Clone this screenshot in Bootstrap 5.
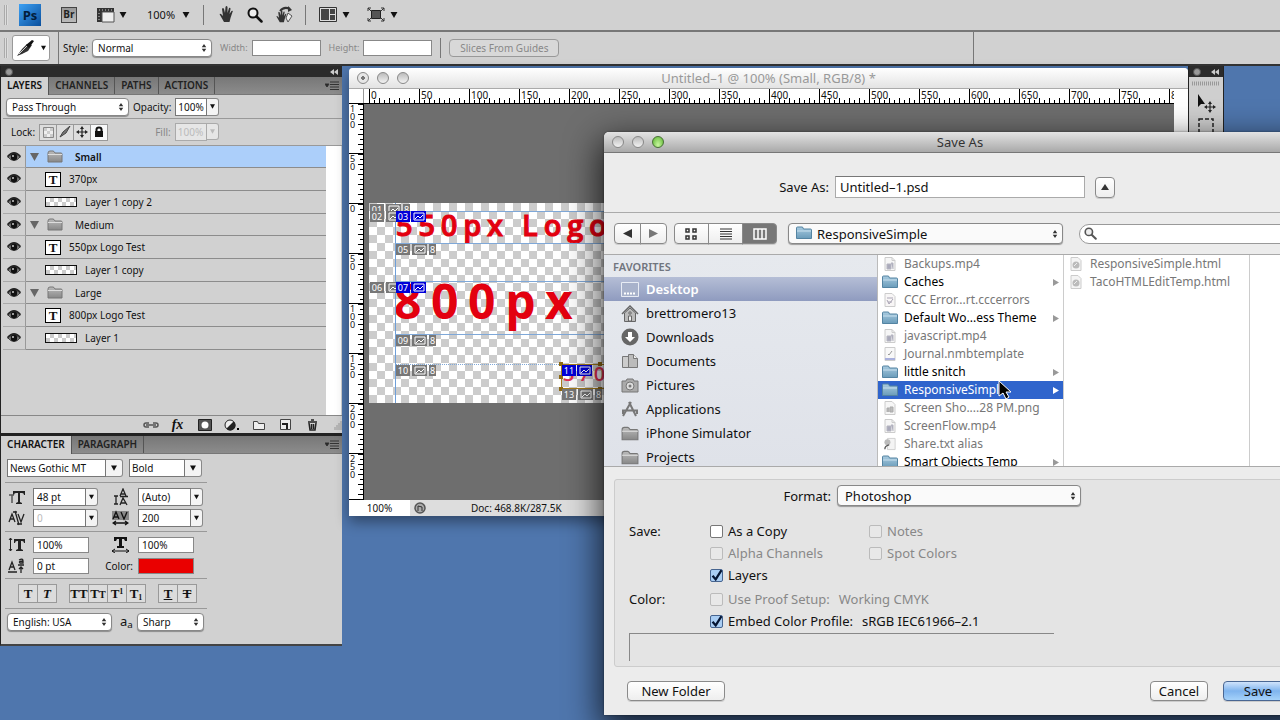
<!DOCTYPE html>
<html lang="en">
<head>
<meta charset="utf-8">
<meta name="viewport" content="width=device-width, initial-scale=1">
<title>Untitled-1 – Save As</title>
<link href="https://cdn.jsdelivr.net/npm/bootstrap@5.3.0/dist/css/bootstrap.min.css" rel="stylesheet">
<style>
body{font-family:"Noto Sans","Open Sans",sans-serif;font-size:10px;line-height:16px;color:#111;background:#4f76ad;min-height:100vh;overflow:hidden}
button,input,select{font:inherit;color:inherit;border-radius:0}
svg{display:block;flex:none}
a{color:inherit;text-decoration:none}
select{appearance:none;border:1px solid #888;border-radius:4px;background:#fff url("data:image/svg+xml,%3Csvg xmlns='http://www.w3.org/2000/svg' width='8' height='10'%3E%3Cpath d='M1 4 4 0 7 4zM1 6 4 10 7 6z' fill='%23333'/%3E%3C/svg%3E") no-repeat right 4px center;background-size:6px 8px;box-shadow:0 1px 1px #0005;padding:0 14px 0 5px;height:18px}
/* top bars */
.bar{background:#d1d1d1;border-bottom:2px solid #777}
.bar-app{display:grid;height:32px;grid-template-columns:15px 42px 35px 23px 28px 35px 21px 16px 28px 29px 29px 14px 23px 25px 23px 20px;align-items:center;padding-left:4px;padding-bottom:1px;font-size:11px}
.bar-opt{height:34px;border-bottom-color:#333}
.grip{width:4px;height:20px;background:repeating-linear-gradient(90deg,#aaa 0 1px,#ddd 1px 2px)}
.vline{width:1px;height:20px;background:#777}
.ps{width:22px;height:22px;background:linear-gradient(135deg,#3da1f4,#0b4f9c);color:#031d3c;font:bold 13px/22px "Open Sans",sans-serif;text-align:center;border:0;padding:0}
.br{width:16px;height:16px;border:1px solid #444;background:linear-gradient(#999,#bbb);color:#222;font:bold 10px/13px "Open Sans",sans-serif;padding:0}
.toolbtn{width:38px;height:26px;border:1px solid #999;border-radius:3px;background:#fff;padding:0}
.f9{font-size:9px}
.dim{color:#888}
.box{border:1px solid #888;background:#fff;height:16px;padding:0 4px;min-width:0}
.guides{border:1px solid #999;border-radius:4px;background:#d8d8d8;color:#888;height:18px;line-height:14px;width:110px;padding:0}
/* palettes */
.palettes{width:342px;background:#d1d1d1;border-left:1px solid #222;border-bottom:2px solid #444}
.darkhead{height:11px;background:#2b2b2b;padding:0 4px}
.dotbtn{width:8px;height:8px;border-radius:50%;background:#999;border:1px solid #555;padding:0}
.tabs{background:linear-gradient(#777,#8c8c8c);height:18px;border-bottom:1px solid #777}
.tabs button{border:0;border-right:1px solid #555;background:transparent;font-weight:600;line-height:17px;height:17px;padding:0 6px;color:#222}
.tabs .on{background:#d1d1d1;color:#111;height:18px}
.tabs svg{margin-left:auto;margin-right:3px}
.blend{height:24px;border-bottom:1px solid #999;margin-left:2px;padding-left:3px}
.lockrow{height:27px;margin-left:2px;border-bottom:1px solid #999}
.lockrow button{width:18px;height:17px;border:1px solid #999;background:#ddd;padding:0;display:grid;place-items:center}
.lockrow>button{margin-right:-1px}
.combo{height:18px}
.combo input{border:1px solid #777;background:#fff;height:18px;padding:0 2px;min-width:0;flex:1;width:0}
.combo button{border:1px solid #888;border-left:0;border-radius:0 3px 3px 0;background:#f4f4f4;width:12px;padding:0;display:grid;place-items:center}
.pct{width:44px}
.off input,.off button{color:#bbb;border-color:#aaa;background:#e6e6e6}
.layers{border-right:15px solid #fff;height:269px;margin-right:1px;margin-left:2px}
.lay{display:grid;grid-template-columns:23px 1fr;height:23px}
.lay .eye{border-right:1px solid #999;border-bottom:1px solid #aaa;display:grid;place-items:center}
.lay .what{display:flex;align-items:center;border-bottom:1px solid #8c8c8c;padding-left:19px}
.lay.grp{height:22px}
.lay.grp .what{padding-left:4px}
.lay.sel .what{background:#accffa;font-weight:600}
.tri{color:#666}
.tee{width:16px;height:15px;border:1px solid #000;background:#fff;font:bold 13px/13px "Liberation Serif",serif;text-align:center}
.thumb{width:32px;height:10px;border:1px solid #111;background:repeating-conic-gradient(#ccc 0 25%,#fff 0 50%) 0 0/8px 8px}
.layfoot{height:21px;border-top:1px solid #888;border-bottom:3px solid #222;display:grid;grid-template-columns:136px repeat(7,27px) 1fr;align-items:center;justify-items:center}
.char{width:202px;margin-left:4px}
.char .ln{display:grid;align-items:center}
.sep{border-bottom:1px solid #999}
.l1{grid-template-columns:116px 73px;column-gap:6px;height:29px;padding-left:2px}
.l2{grid-template-columns:20px 65px 30px 65px;column-gap:5px;padding-left:3px;height:21px}
.l3{grid-template-columns:20px 56px 39px 56px;column-gap:5px;padding-left:3px;height:21px}
.p2{padding:3px 0 3px}
.p3{padding:2px 0 2px}
.l2 input,.l3 input{padding:0 3px}
.combo .wide{width:17px}
.styles button{width:20px;height:19px;border:1px solid #999;margin-right:-1px;background:#dcdcdc;padding:0;font:bold 13px/15px "Liberation Serif",serif}
.styles small{font-size:10px}
.styles sup,.styles sub{font-size:8px}
.styles{height:30px;padding-left:13px}
.langrow{padding:4px 3px 0 2px;height:35px;align-items:flex-start}
.swatch{background:#ea0000;height:16px;border:1px solid #888;padding:0}
/* windows */
.win{position:absolute}
.docwin{left:349px;right:92px;top:2px;height:448px;background:#ddd;border-radius:4px 4px 0 0;box-shadow:0 6px 14px #0006}
.doctitle{height:22px;background:linear-gradient(#fff,#e3e3e3);border-bottom:1px solid #aaa;border-radius:4px 4px 0 0;color:#999;font-size:13px}
.lights{gap:8px}
.lights button{width:12px;height:12px;border-radius:50%;border:1px solid #888;background:linear-gradient(#bbb,#f2f2f2);padding:0;display:grid;place-items:center}
.lights .edited{background:radial-gradient(circle,#777 0 2px,#e6e6e6 2px)}
.lights .go{background:radial-gradient(at 50% 80%,#c9f7a0,#5bb52f);border-color:#476f35}
.mid{flex:none;text-align:center}
.hrule{height:15px;background:#fff;border-bottom:1px solid #000;overflow:hidden}
.corner{width:15px;border-right:1px solid #999;flex:none}
.hticks{margin-left:5px;width:805px;overflow:hidden;background:repeating-linear-gradient(90deg,#000 0 1px,transparent 1px 50px),repeating-linear-gradient(90deg,#000 0 1px,transparent 1px 10px) 0 100%/100% 5px no-repeat,repeating-linear-gradient(90deg,#000 0 1px,transparent 1px 5px) 0 100%/100% 3px no-repeat}
.hticks span{flex:0 0 50px;padding-left:2px;font-size:10px;line-height:12px}
.vrule{width:15px;background:#fff;border-right:1px solid #000;flex:none}
.vticks{height:396px;overflow:hidden;background:repeating-linear-gradient(#000 0 1px,transparent 1px 50px) 0 -1px,repeating-linear-gradient(#000 0 1px,transparent 1px 10px) 100% 0/5px 100% no-repeat,repeating-linear-gradient(#000 0 1px,transparent 1px 5px) 100% 0/3px 100% no-repeat}
.vticks span{display:block;height:50px;width:7px;margin-left:1px;padding-top:1px;word-break:break-all;font-size:9px;line-height:8px}
.stage{background:#6e6e6e;padding:99px 0 0 5px;height:396px;overflow:hidden}
.art{position:relative;width:800px;height:200px;background:repeating-conic-gradient(#fff 0 25%,#ccc 0 50%) 0 0/16px 16px}
.art>*{position:absolute}
.ink{color:#e3000f;letter-spacing:.2em;white-space:nowrap;font-family:"Open Sans",sans-serif}
.ink-m{left:27px;top:0;font-size:29px;font-weight:600;line-height:44px;-webkit-text-stroke:1px #e3000f}
.ink-l{left:25px;top:64px;font-size:48px;font-weight:700;line-height:68px}
.ink-s{left:194px;top:157px;font-size:20px;font-weight:600;line-height:28px;color:#e3304f}
.gl{left:26px;right:0;border-top:1px solid #7fa8d8}
.slice{display:flex;gap:2px;color:#fff;font-size:9px;line-height:11px;height:11px}
.slice i{font-style:normal;background:#777;display:grid;place-items:center}
.slice i:first-child{width:14px}.slice i:nth-child(2){width:15px}.slice i:nth-child(3){width:7px}
.slice.u i{background:#0000d8}
.slice.u{gap:1px}
.hd{width:4px;height:4px;background:#8f6a14}
.docfoot{height:16px;background:#ddd;font-size:10px}
.tools{right:56px;width:36px;top:0;height:120px;background:#cfcfcf;border:solid #222;border-width:0 1px}
/* save dialog */
.dlg{left:604px;right:-36px;top:66px;height:583px;background:#ececec;border-radius:5px 5px 0 0;box-shadow:0 12px 34px 4px #000b,0 0 2px #0008;font-size:13px;line-height:18px;display:flex;flex-direction:column}
.dlgtitle{height:21px;background:linear-gradient(#e3e3e3,#a9a9a9);border-bottom:1px solid #777;border-radius:5px 5px 0 0;color:#333}
.namerow{height:60px;border-bottom:1px solid #aaa;display:grid;grid-template-columns:225px 250px 24px;column-gap:6px;align-items:center;padding-top:9px}
.namerow label,.fmt label{text-align:right}
.namerow input{height:22px;border:1px solid #aaa;border-top-color:#777;padding:0 4px}
.namerow .tog{height:21px;margin-left:4px}
.btnx{border:1px solid #8a8a8a;border-radius:4px;background:linear-gradient(#fff,#eee);height:20px;padding:0;line-height:16px;box-shadow:0 1px 0 #0002;display:grid;place-items:center}
.navrow{height:42px;border-bottom:1px solid #aaa;padding:0 10px}
.seg .btnx{width:35px;border-radius:0;margin-right:-1px;height:21px}
.seg .btnx:first-child{border-radius:4px 0 0 4px}.seg .btnx:last-child{border-radius:0 4px 4px 0}
.seg .btnx.s{width:27px}
.seg .dark{background:#777}
.place{width:275px}
.place select,.fmt select{width:100%;height:21px;border-radius:4px;background-color:#fafafa;font-size:13px}
.place select{padding-left:28px}
.fmt select{padding-left:7px}
.place svg{position:absolute;left:8px;top:3px}
.find{height:20px;border:1px solid #999;border-radius:10px;background:#fff}
.find input{border:0;background:transparent;height:16px;outline:0}
.brow{height:212px;border-bottom:1px solid #aaa;display:grid;grid-template-columns:274px 186px 186px 1fr;overflow:hidden;background:#fff}
.side{background:linear-gradient(#e6e9ee,#dfe2e9);border-right:1px solid #bbb;overflow:hidden}
.side h2{font-size:11px;line-height:22px;font-weight:600;color:#70757e;margin:0;padding:1px 0 0 9px;height:22px}
.side a{display:flex;align-items:center;gap:7px;height:24px;padding-left:17px}
.side a.on{background:linear-gradient(#b5bed6,#8f9bbf);color:#fff;font-weight:600}
.pane{border-right:1px solid #ccc;overflow:hidden}
.pane a{display:grid;grid-template-columns:16px 1fr 7px;align-items:center;justify-items:start;height:18px;padding:0 3px 0 4px;column-gap:6px;color:#777;font-size:12px;white-space:nowrap}
.pane a>:first-child{justify-self:center}
.pane a.dir{color:#000}
.pane .more{color:#999}
.pane a.on,.pane a.on .more{background:#2f64cc;color:#fff}
.opts{margin:12px 10px 0;height:188px;background:#e4e4e4;border:1px solid #ccc;border-radius:3px;padding:5px 14px 0}
.fmt{display:grid;grid-template-columns:202px 244px;column-gap:6px;align-items:center;margin-bottom:14px}
.opts .ck{display:grid;grid-template-columns:81px 159px 1fr;height:22px;align-items:center}
.opts .ck.gap{margin-top:2px}
.opts .two{grid-template-columns:81px 1fr}
.ck label{display:flex;gap:5px;align-items:center;white-space:nowrap}
.ck em{font-style:normal;margin-left:4px}
.ck input{appearance:none;flex:none;width:13px;height:13px;border:1px solid #777;border-radius:2px;background:#fff;margin:0}
.ck input:disabled{border-color:#bbb;background:#e8e8e8}
.ck input:disabled~*{color:#888}
.ck input:checked{border-color:#46648f;background:#a9cdf3 url("data:image/svg+xml,%3Csvg xmlns='http://www.w3.org/2000/svg' viewBox='0 0 12 12'%3E%3Cpath d='M2 6 5 9.500 11 0' fill='none' stroke='%23051533' stroke-width='2.200'/%3E%3C/svg%3E") center/12px no-repeat}
.well{width:425px;height:28px;border:solid #888;border-width:1px 0 0 1px;margin-top:1px}
.acts{flex:1;padding:0 23px;gap:15px}
.save{background:linear-gradient(#cfe3fb,#7fb4ee 50%,#a5d2fa);border-color:#4a6793}
.pointer{left:394px;top:248px;position:absolute}
</style>
</head>
<body class="d-flex flex-column">
<svg width="0" height="0" class="position-absolute">
<defs>
<linearGradient id="fb" x2="0" y2="1"><stop stop-color="#a9cbe0"/><stop offset="1" stop-color="#6a9cba"/></linearGradient>
<linearGradient id="fg" x2="0" y2="1"><stop stop-color="#bbb"/><stop offset="1" stop-color="#888"/></linearGradient>
<symbol id="dn" viewBox="0 0 8 7"><path d="M0 0h8L4 7z" fill="currentColor"/></symbol>
<symbol id="eye" viewBox="0 0 14 12"><path d="M0 5Q7-3 14 5L13 7Q7-1 1 7z" fill="#222"/><path d="M1 6Q7 0 13 6 7 13 1 6z" fill="#888" stroke="#333"/><circle cx="7" cy="6" r="3.300" fill="#111"/><circle cx="6" cy="5" r="1" fill="#ccc"/></symbol>
<symbol id="gf" viewBox="0 0 16 13"><path d="M1 12V3q0-2 2-2h3q1 0 2 2h6q1 0 1 1v8z" fill="url(#fg)" stroke="#777"/><path d="M1 4.500h14" stroke="#ddd"/></symbol>
<symbol id="bf" viewBox="0 0 16 14"><path d="M.5 12.500V2q0-1 1-1h5l1 2h7q1 0 1 1v8.500z" fill="url(#fb)" stroke="#5484a2"/><path d="M1 5h14" stroke="#c8e0ee"/></symbol>
<symbol id="doc" viewBox="0 0 12 14"><path d="M1 .5h7l3 3v10H1z" fill="#f6f6f6" stroke="#ccc"/><path d="M8 .5v3h3" fill="none" stroke="#ccc"/><path d="M3 7h4v5H3zM7 6h2v6" fill="#aab" stroke="#b5b5c0"/></symbol>
<symbol id="ccc" viewBox="0 0 12 14"><path d="M1 .5h7l3 3v10H1z" fill="#f8f6f6" stroke="#ccc"/><path d="M3 5h6M3 7l2 4 4-5M4 9h4" fill="none" stroke="#a9a4b4"/></symbol>
<symbol id="jrn" viewBox="0 0 12 14"><path d="M1 .5h10v13H1z" fill="#f8f8f8" stroke="#ccc"/><path d="M1 11h10v2H1z" fill="#a9b0dc"/><path d="m4 7 1 1 3-4" fill="none" stroke="#999"/></symbol>
<symbol id="png" viewBox="0 0 12 14"><path d="M1 .5h7l3 3v10H1z" fill="#f6f6f6" stroke="#ccc"/><path d="M3 11V7h2v4M6 11V6h3v5z" fill="#bbb" stroke="#aaa"/></symbol>
<symbol id="ali" viewBox="0 0 14 14"><path d="M4 .5h9v13H4z" fill="#f4f4f4" stroke="#ccc"/><circle cx="4" cy="5" r="3.500" fill="#bbb"/><path d="M1 13q0-4 5-5" fill="none" stroke="#555" stroke-width="1.500"/></symbol>
<symbol id="htm" viewBox="0 0 12 14"><path d="M1 .5h7l3 3v10H1z" fill="#f4f4f4" stroke="#ccc"/><circle cx="6" cy="8" r="3.500" fill="#bbb"/><path d="m4 9 3-3" stroke="#eee"/></symbol>
<symbol id="rt" viewBox="0 0 7 8"><path d="M0 0v8l7-4z" fill="currentColor"/></symbol>
<symbol id="menu" viewBox="0 0 14 10"><path d="M0 3h4L2 6zM5 1h9M5 3.500h9M5 6h9M5 8.500h9" fill="#222" stroke="#333"/></symbol>
<symbol id="img" viewBox="0 0 12 9"><path d="M1 1h10v7H1z M2 7l3-3 2 2 3-3" fill="none" stroke="#fff"/></symbol>
<symbol id="hand" viewBox="0 0 16 17"><path d="M5 16 1 9q-1-2 1-1l2 2-1-7q1-2 2 0l1 4 .5-6q1-2 2 0v6l1.500-5q1.500-1 1.500 1l-1 5 2-3q2-1 1 1l-2 6-1 4z" fill="#333"/></symbol>
<symbol id="mag" viewBox="0 0 16 16"><circle cx="6" cy="6" r="4.500" fill="#eee" stroke="currentColor" stroke-width="2"/><path d="m9.500 9.500 5 5" stroke="currentColor" stroke-width="2.500" stroke-linecap="round"/></symbol>
<symbol id="mv" viewBox="0 0 12 12"><path d="M6 0 8 3H6.600v2.400H9V4l3 2-3 2V6.600H6.600V9H8l-2 3-2-3h1.400V6.600H3V8L0 6l3-2v1.400h2.400V3H4z" fill="#222"/></symbol>
</defs>
</svg>

<header>
<div class="bar bar-app">
<span class="grip"></span><button class="ps">Ps</button><button class="br">Br</button>
<svg width="19" height="16"><path d="M1 1h17v4H6v10H1z" fill="#333"/><path d="M6 5h12v10H6z" fill="#eee" stroke="#555"/><path d="M3 3h15M3 6v9" stroke="#ccc" stroke-dasharray="1 2"/></svg>
<svg width="8" height="6"><use href="#dn"/></svg><span>100%</span><svg width="8" height="6"><use href="#dn"/></svg><span class="vline"></span>
<svg width="16" height="17"><use href="#hand"/></svg><svg width="16" height="16"><use href="#mag"/></svg>
<svg width="18" height="18"><use href="#hand" y="4" width="12" height="13"/><path d="M4 5q4-5 10-2" fill="none" stroke="#333" stroke-width="2"/><path d="M12 0v6l4-2z" fill="#333"/><path d="m12 7 4 3-4 6-2-4z" fill="#eee" stroke="#555"/></svg><span class="vline"></span>
<svg width="18" height="15"><path d="M.5.5h17v14H.5z" fill="#ddd" stroke="#333"/><path d="M2 2h8v11H2zM11 2h5v5h-5zM11 8h5v5h-5z" fill="#444"/></svg><svg width="8" height="6"><use href="#dn"/></svg>
<svg width="18" height="15"><path d="M4.500 3.500h9v8h-9z" fill="#555" stroke="#222"/><path d="M1 4V1h3M14 1h3v3M17 11v3h-3M4 14H1v-3M1 1l3 3M17 1l-3 3M1 14l3-3M17 14l-3-3" fill="none" stroke="#333"/></svg><svg width="8" height="6"><use href="#dn"/></svg>
</div>
<div class="bar bar-opt d-flex align-items-center ps-1">
<span class="grip me-1"></span>
<button class="toolbtn d-flex align-items-center justify-content-around"><svg width="20" height="17"><path d="m1 16 5-7 5-5 5 1-4 6-6 3z" fill="#333"/><path d="m3 14 9-9" stroke="#ccc"/><path d="m10 5 6-5 2 1-5 7z" fill="#111"/></svg><svg width="5" height="6"><use href="#dn"/></svg></button>
<span class="vline h-100 ms-2 me-1"></span>
<label for="sty" class="me-1">Style:</label><select id="sty" style="width:120px"><option>Normal</option></select>
<label for="w" class="dim f9 ms-2 me-1">Width:</label><input id="w" class="box" style="width:69px">
<label for="h" class="dim f9 ms-2 me-1">Height:</label><input id="h" class="box" style="width:69px">
<span class="vline ms-2 me-1"></span><button class="guides ms-1" disabled>Slices From Guides</button>
<span class="vline h-100 ms-auto" style="margin-right:24%"></span>
</div>
</header>

<main class="position-relative flex-fill">
<aside class="palettes">
<div class="darkhead d-flex align-items-center justify-content-between"><button class="dotbtn" aria-label="Close"></button><svg width="8" height="6"><path d="M4 0v6L0 3zM8 0v6L4 3z" fill="#ccc"/></svg></div>
<div class="tabs d-flex align-items-center"><button class="on">LAYERS</button><button>CHANNELS</button><button>PATHS</button><button>ACTIONS</button><svg width="14" height="10"><use href="#menu"/></svg></div>
<div class="blend d-flex align-items-center"><select aria-label="Blend mode" style="width:123px"><option>Pass Through</option></select><label for="op" class="ms-1 me-1">Opacity:</label><div class="combo pct d-flex"><input id="op" value="100%"><button aria-label="Opacity"><svg width="5" height="5"><use href="#dn"/></svg></button></div></div>
<div class="lockrow d-flex align-items-center ps-1"><span class="me-1 ms-1">Lock:</span>
<button><svg width="11" height="11"><path d="M.5.5h10v10H.5z" fill="#eee" stroke="#888"/><path d="M1 1h3v3H1zM7 1h3v3H7zM4 4h3v3H4zM1 7h3v3H1zM7 7h3v3H7z" fill="#ccc"/></svg></button><button><svg width="12" height="12"><path d="M1 11 4 6l7-6-4 7z" fill="#777" stroke="#444"/></svg></button><button><svg width="12" height="12"><use href="#mv"/></svg></button><button class="bg-light"><svg width="10" height="12"><path d="M1 5h8v6H1z" fill="#111"/><path d="M2.500 6V3.500q0-2 2.500-2t2.500 2V6" fill="none" stroke="#111" stroke-width="2"/></svg></button>
<label for="fl" class="dim ms-5 me-1">Fill:</label><div class="combo pct off d-flex"><input id="fl" value="100%" disabled><button disabled aria-label="Fill"><svg width="5" height="5"><use href="#dn"/></svg></button></div></div>
<div class="layers" id="layers"></div>
<div class="layfoot"><span></span>
<svg width="18" height="8"><path d="M7 2H4a2 2 0 0 0 0 4h3M11 2h3a2 2 0 0 1 0 4h-3M4 4h10" fill="none" stroke="#555" stroke-width="1.500"/></svg>
<i style="font:italic bold 14px 'Liberation Serif',serif">fx</i>
<svg width="14" height="12"><path d="M.5.5h13v11H.5z" fill="#555" stroke="#222"/><circle cx="7" cy="6" r="3.500" fill="#fff"/></svg>
<svg width="16" height="12"><circle cx="6" cy="6" r="5" fill="#eee" stroke="#222"/><path d="M9.500 2.500a5 5 0 1 1-7 7z" fill="#222"/><path d="M13 9h2v2h-2z"/></svg>
<svg width="12" height="10"><path d="M.5 9.500v-8h4l1 2h6v6z" fill="#eee" stroke="#444"/></svg>
<svg width="11" height="11"><path d="M.5.5h10v10h-10z" fill="#eee" stroke="#444"/><path d="M2 5h5v5" fill="none" stroke="#222" stroke-width="2"/></svg>
<svg width="11" height="12"><path d="M1 3h9M4 1h3M2 4l1 7h5l1-7M4.500 5v5M6.500 5v5" fill="none" stroke="#222" stroke-width="1.500"/></svg>
<svg class="ms-auto" width="10" height="10"><path d="M9 1v9M7 3v7M5 5v5M3 7v3" stroke="#999"/></svg>
</div>
<div class="tabs d-flex align-items-center"><button class="on">CHARACTER</button><button>PARAGRAPH</button><svg width="14" height="10"><use href="#menu"/></svg></div>
<div class="char">
<div class="ln l1 sep"><div class="combo d-flex"><input aria-label="Font" value="News Gothic MT"><button class="wide" aria-label="Fonts"><svg width="6" height="6"><use href="#dn"/></svg></button></div><div class="combo d-flex"><input aria-label="Weight" value="Bold"><button class="wide" aria-label="Weights"><svg width="6" height="6"><use href="#dn"/></svg></button></div></div>
<div class="sep p2">
<div class="ln l2"><svg width="18" height="16" viewBox="0 0 18 16"><path d="M5 2h12v4h-1q0-2-2-2h-2v9l2 1v1H8v-1l2-1V4H8Q6 4 6 6H5z" fill="#222"/><path d="M1 6h5M4 6v8" stroke="#555" stroke-width="1.500"/></svg><div class="combo d-flex"><input aria-label="Size" value="48 pt"><button aria-label="Sizes"><svg width="5" height="6"><use href="#dn"/></svg></button></div>
<svg class="ms-auto me-1" width="16" height="18"><path d="m7 8 3-7 3 7M8 6h4M7 17l3-7 4 7M8 15h5M3 8v8M1 8h4M1 16h4M7 8.500h8" fill="none" stroke="#222" stroke-width="1.300"/></svg><div class="combo d-flex"><input aria-label="Leading" value="(Auto)"><button aria-label="Leadings"><svg width="5" height="6"><use href="#dn"/></svg></button></div></div>
<div class="ln l2"><svg width="18" height="16"><path d="m1 12 3-8 3 8M2 9h4M10 4l3 8 3-8M7 1l4 14M5 2h4M9 14h5" fill="none" stroke="#222" stroke-width="1.300"/></svg><div class="combo d-flex"><input aria-label="Kerning" value="0" style="color:#bbb"><button aria-label="Kernings"><svg width="5" height="6"><use href="#dn"/></svg></button></div>
<svg class="ms-auto me-1" width="17" height="16"><path d="M0 1h17v9H0z" fill="#888"/><path d="m1 9 3-7 3 7M2 7h4M9 2l3 7 3-7M1 13h15M4 11l-3 2 3 2M13 11l3 2-3 2" fill="none" stroke="#111" stroke-width="1.300"/></svg><div class="combo d-flex"><input aria-label="Tracking" value="200"><button aria-label="Trackings"><svg width="5" height="6"><use href="#dn"/></svg></button></div></div>
</div>
<div class="sep p3">
<div class="ln l3"><svg width="18" height="15"><path d="M6 2h11v4h-1q0-2-2-2h-1v8l2 1v1H8v-1l2-1V4H9Q7 4 7 6H6z" fill="#222"/><path d="M2.500 1v13M1 3l1.500-2L4 3M1 12l1.500 2L4 12" fill="none" stroke="#222"/></svg><input class="box" aria-label="Vertical scale" value="100%"><svg class="ms-auto me-1" width="17" height="16"><path d="M2 0h13v4h-2l-1-2h-2v7h2v2H5V9h2V2H5L4 4H2z" fill="#111"/><path d="M0 14h17M3 12l-3 2 3 2M14 12l3 2-3 2" fill="none" stroke="#111"/></svg><input class="box" aria-label="Horizontal scale" value="100%"></div>
<div class="ln l3"><svg width="18" height="16"><path d="m1 12 3-8 3 8M2 9h4M0 14h9M10 7h6M13 9v6M11 11l2-2 2 2M11 2q4-2 4 1v2h-3q-2-2 3-2" fill="none" stroke="#222" stroke-width="1.300"/></svg><input class="box" aria-label="Baseline shift" value="0 pt"><span class="text-end text-nowrap">Color:</span><button class="swatch" aria-label="Text color"></button></div>
</div>
<div class="styles sep d-flex align-items-center"><button>T</button><button class="me-2"><i>T</i></button><button class="ms-1">TT</button><button>T<small>T</small></button><button>T<sup>1</sup></button><button class="me-2">T<sub>1</sub></button><button class="ms-1"><u>T</u></button><button><s>T</s></button></div>
<div class="langrow d-flex"><select aria-label="Language" style="width:105px"><option>English: USA</option></select><span class="ms-2 text-center" style="font-size:13px">a<sub>a</sub></span><select class="ms-auto" aria-label="Anti-alias" style="width:67px"><option>Sharp</option></select></div>
</div>
</aside>

<section class="win docwin d-flex flex-column">
<div class="doctitle d-flex align-items-center px-2"><div class="lights d-flex flex-fill" style="flex-basis:0!important"><button class="edited" aria-label="Close"></button><button aria-label="Minimize"></button><button aria-label="Zoom"></button></div><span class="mid">Untitled–1 @ 100% (Small, RGB/8) *</span><span class="flex-fill" style="flex-basis:0!important"></span></div>
<div class="d-flex flex-fill"><div class="flex-fill overflow-hidden">
<div class="hrule d-flex"><span class="corner"></span><div class="hticks d-flex"><span>0</span><span>50</span><span>100</span><span>150</span><span>200</span><span>250</span><span>300</span><span>350</span><span>400</span><span>450</span><span>500</span><span>550</span><span>600</span><span>650</span><span>700</span><span>750</span><span>800</span></div></div>
<div class="d-flex"><div class="vrule"><div class="vticks"><span>100</span><span>50</span><span>0</span><span>50</span><span>100</span><span>150</span><span>200</span><span>250</span></div></div>
<div class="stage flex-fill"><div class="art" id="art">
<div class="ink ink-m">550px Logo Test</div>
<div class="ink ink-l">800px Logo Test</div>
<div class="ink ink-s">370px</div>
<div style="left:26px;top:0;bottom:0;border-left:1px solid #6f9fd8"></div>
<div class="gl" style="top:8px"></div><div class="gl" style="top:40px"></div><div class="gl" style="top:78px"></div><div class="gl" style="top:131px"></div><div class="gl" style="top:161px;border-top-style:dotted"></div>
<div style="left:192px;top:161px;width:370px;height:25px;border:1px solid #a67c1a"></div>
<i class="hd" style="left:190px;top:159px"></i><i class="hd" style="left:190px;top:172px"></i><i class="hd" style="left:190px;top:184px"></i><i class="hd" style="left:229px;top:159px"></i><i class="hd" style="left:229px;top:184px"></i>
</div></div></div></div>
<div style="width:14px;background:#fff"></div></div>
<div class="docfoot d-flex align-items-center"><span class="bg-white text-center" style="width:61px">100%</span><svg class="mx-1" width="12" height="12"><circle cx="6" cy="6" r="5" fill="#aaa" stroke="#555" stroke-width="1.500"/><path d="M4 9V4l4 1v4" fill="none" stroke="#333"/></svg><span style="margin-left:41px">Doc: 468.8K/287.5K</span></div>
</section>

<section class="win tools"><div class="darkhead d-flex align-items-center justify-content-between"><button class="dotbtn" aria-label="Close tools"></button><svg width="8" height="6"><path d="M4 0v6L0 3zM8 0v6L4 3z" fill="#ccc"/></svg></div>
<div class="d-flex flex-column align-items-center pt-1"><svg width="28" height="5"><path d="M0 2.500h28" stroke="#999" stroke-width="4" stroke-dasharray="1 1"/></svg><svg class="mt-2" width="20" height="20"><path d="M2 0v13l3-3h4z" fill="#111"/><use href="#mv" x="8" y="7" width="12" height="12"/></svg><svg class="mt-1" width="16" height="24"><path d="M1 1h14v20H1z" fill="none" stroke="#222" stroke-width="1.500" stroke-dasharray="4 2"/></svg></div></section>

<section class="win dlg" role="dialog" aria-label="Save As">
<div class="dlgtitle d-flex align-items-center px-2"><div class="lights d-flex flex-fill" style="flex-basis:0!important"><button aria-label="Close dialog"></button><button aria-label="Minimize dialog"></button><button class="go" aria-label="Zoom dialog"></button></div><span class="mid">Save As</span><span class="flex-fill" style="flex-basis:0!important"></span></div>
<div class="namerow"><label for="fn">Save As:</label><input id="fn" value="Untitled–1.psd"><button class="btnx tog" aria-label="Collapse"><svg width="8" height="6"><path d="M4 0 8 6H0z" fill="#333"/></svg></button></div>
<div class="navrow d-flex align-items-center">
<div class="seg d-flex me-2"><button class="btnx s" aria-label="Back"><svg width="9" height="9"><path d="M9 0v9L0 4.500z" fill="#333"/></svg></button><button class="btnx s" aria-label="Forward"><svg width="9" height="9"><path d="M0 0v9l9-4.500z" fill="#777"/></svg></button></div>
<div class="seg d-flex me-2"><button class="btnx" aria-label="Icons"><svg width="13" height="12"><path d="M1 1h3v3H1zM8 1h3v3H8zM1 8h3v3H1zM8 8h3v3H8z" fill="none" stroke="#333" stroke-width="1.500"/></svg></button><button class="btnx" aria-label="List"><svg width="12" height="12"><path d="M0 1h12M0 3.500h12M0 6h12M0 8.500h12M0 11h12" stroke="#333"/></svg></button><button class="btnx dark" aria-label="Columns"><svg width="14" height="12"><path d="M1 1h12v10H1zM5 1v10M9 1v10" fill="none" stroke="#fff" stroke-width="1.500"/></svg></button></div>
<div class="place position-relative ms-1"><svg width="16" height="14"><use href="#bf"/></svg><select aria-label="Folder"><option>ResponsiveSimple</option></select></div>
<div class="find flex-fill d-flex align-items-center ms-3 ps-1" style="color:#555"><svg width="13" height="13"><use href="#mag"/></svg><input class="flex-fill" type="search" aria-label="Search"></div>
</div>
<div class="brow">
<nav class="side"><h2>FAVORITES</h2>
<a href="#" class="on"><svg width="18" height="15"><path d="M.5.5h17v14H.5z" fill="#a8b2cb" stroke="#e8ecf4"/><path d="M3 11.500h12" stroke="#fff" stroke-width="2" stroke-dasharray="2 1"/></svg>Desktop</a>
<a href="#"><svg width="18" height="17"><path d="M1 9 9 1l8 8" fill="none" stroke="#666" stroke-width="1.500"/><path d="M3.500 8v8.500h11V8L9 3z" fill="#bbb" stroke="#666"/><path d="M7.500 11h3v5h-3zM8 7h2v2H8z" fill="#eee" stroke="#666"/></svg>brettromero13</a>
<a href="#"><svg width="18" height="18"><circle cx="9" cy="9" r="8.500" fill="#666"/><path d="M7 4h4v5h3l-5 5-5-5h3z" fill="#fff"/></svg>Downloads</a>
<a href="#"><svg width="18" height="17"><path d="M1.500 3.500h8v11h-8z" fill="#ccc" stroke="#777"/><path d="M7.500 1.500h5l4 4v9h-9z" fill="#bbb" stroke="#777"/><path d="M12.500 1.500v4h4" fill="#eee" stroke="#777"/></svg>Documents</a>
<a href="#"><svg width="18" height="15"><path d="M1 3h4l1-2h6l1 2h4v11H1z" fill="#aaa" stroke="#777"/><circle cx="9" cy="8" r="4" fill="#ddd" stroke="#777"/><circle cx="9" cy="8" r="1.500" fill="#777"/></svg>Pictures</a>
<a href="#"><svg width="18" height="17"><path d="M2 15 10 1M8 1l7 14M1 9.500h16M2 9v4M16 9v4" fill="none" stroke="#777" stroke-width="2"/></svg>Applications</a>
<a href="#"><svg width="18" height="15"><use href="#gf"/></svg>iPhone Simulator</a>
<a href="#"><svg width="18" height="15"><use href="#gf"/></svg>Projects</a>
</nav>
<div class="pane" id="p1"></div><div class="pane" id="p2"></div><div></div>
</div>
<div class="opts">
<div class="fmt"><label for="fmt">Format:</label><select id="fmt"><option>Photoshop</option></select></div>
<div class="ck"><span>Save:</span><label><input type="checkbox"><span>As a Copy</span></label><label><input type="checkbox" disabled><span>Notes</span></label></div>
<div class="ck"><span></span><label><input type="checkbox" disabled><span>Alpha Channels</span></label><label><input type="checkbox" disabled><span>Spot Colors</span></label></div>
<div class="ck"><span></span><label><input type="checkbox" checked><span>Layers</span></label></div>
<div class="ck gap two"><span>Color:</span><label><input type="checkbox" disabled><span>Use Proof Setup:</span><em>Working CMYK</em></label></div>
<div class="ck two"><span></span><label><input type="checkbox" checked><span>Embed Color Profile:</span><em>sRGB IEC61966–2.1</em></label></div>
<div class="well"></div>
</div>
<div class="acts d-flex align-items-center"><button class="btnx me-auto" style="width:98px">New Folder</button><button class="btnx" style="width:58px">Cancel</button><button class="btnx save" style="width:70px">Save</button></div>
<svg class="pointer" width="15" height="20"><path d="M1 1v15l4-3 3 6 3-2-3-5h5z" fill="#000" stroke="#fff"/></svg>
</section>
</main>
<script>
const use=(id,w,h,c='')=>`<svg width="${w}" height="${h}" class="${c}"><use href="#${id}"/></svg>`;
document.getElementById('layers').innerHTML=[['g','Small'],['t','370px'],['l','Layer 1 copy 2'],['g','Medium'],['t','550px Logo Test'],['l','Layer 1 copy'],['g','Large'],['t','800px Logo Test'],['l','Layer 1']].map(([k,n],i)=>
`<div class="lay ${k=='g'?'grp':''} ${i?'':'sel'}"><span class="eye">${use('eye',14,12)}</span><span class="what">${k=='g'?use('dn',9,8,'tri me-2')+use('gf',16,13,'me-2')+`<span class="ms-1">${n}</span>`:k=='t'?`<span class="tee me-2">T</span>${n}`:`<span class="thumb me-2"></span>${n}`}</span></div>`).join('');
const f=(k,n,on)=>`<a href="#" class="${k=='bf'?'dir':''} ${on?'on':''}">${k=='bf'?use('bf',16,14):use(k,12,14)}<span>${n}</span>${k=='bf'?use('rt',6,7,'more'):''}</a>`;
document.getElementById('p1').innerHTML=[['doc','Backups.mp4'],['bf','Caches'],['ccc','CCC Error...rt.cccerrors'],['bf','Default Wo...ess Theme'],['doc','javascript.mp4'],['jrn','Journal.nmbtemplate'],['bf','little snitch'],['bf','ResponsiveSimple',1],['png','Screen Sho....28 PM.png'],['doc','ScreenFlow.mp4'],['ali','Share.txt alias'],['bf','Smart Objects Temp']].map(a=>f(...a)).join('');
document.getElementById('p2').innerHTML=[['htm','ResponsiveSimple.html'],['htm','TacoHTMLEditTemp.html']].map(a=>f(...a)).join('');
document.getElementById('art').insertAdjacentHTML('beforeend',[['01',1,1],['02',1,8],['03',27,8,1],['05',27,41],['06',1,79],['07',27,79,1],['09',27,132],['10',27,162],['11',193,162,1],['13',193,186]].map(([n,x,y,u])=>`<div class="slice ${u?'u':''}" style="left:${x}px;top:${y}px"><i>${n}</i><i>${use('img',12,9)}</i>${u||n=='02'||n=='06'?'':'<i>8</i>'}</div>`).join(''));
</script>
<script src="https://cdn.jsdelivr.net/npm/bootstrap@5.3.0/dist/js/bootstrap.bundle.min.js"></script>
</body>
</html>
